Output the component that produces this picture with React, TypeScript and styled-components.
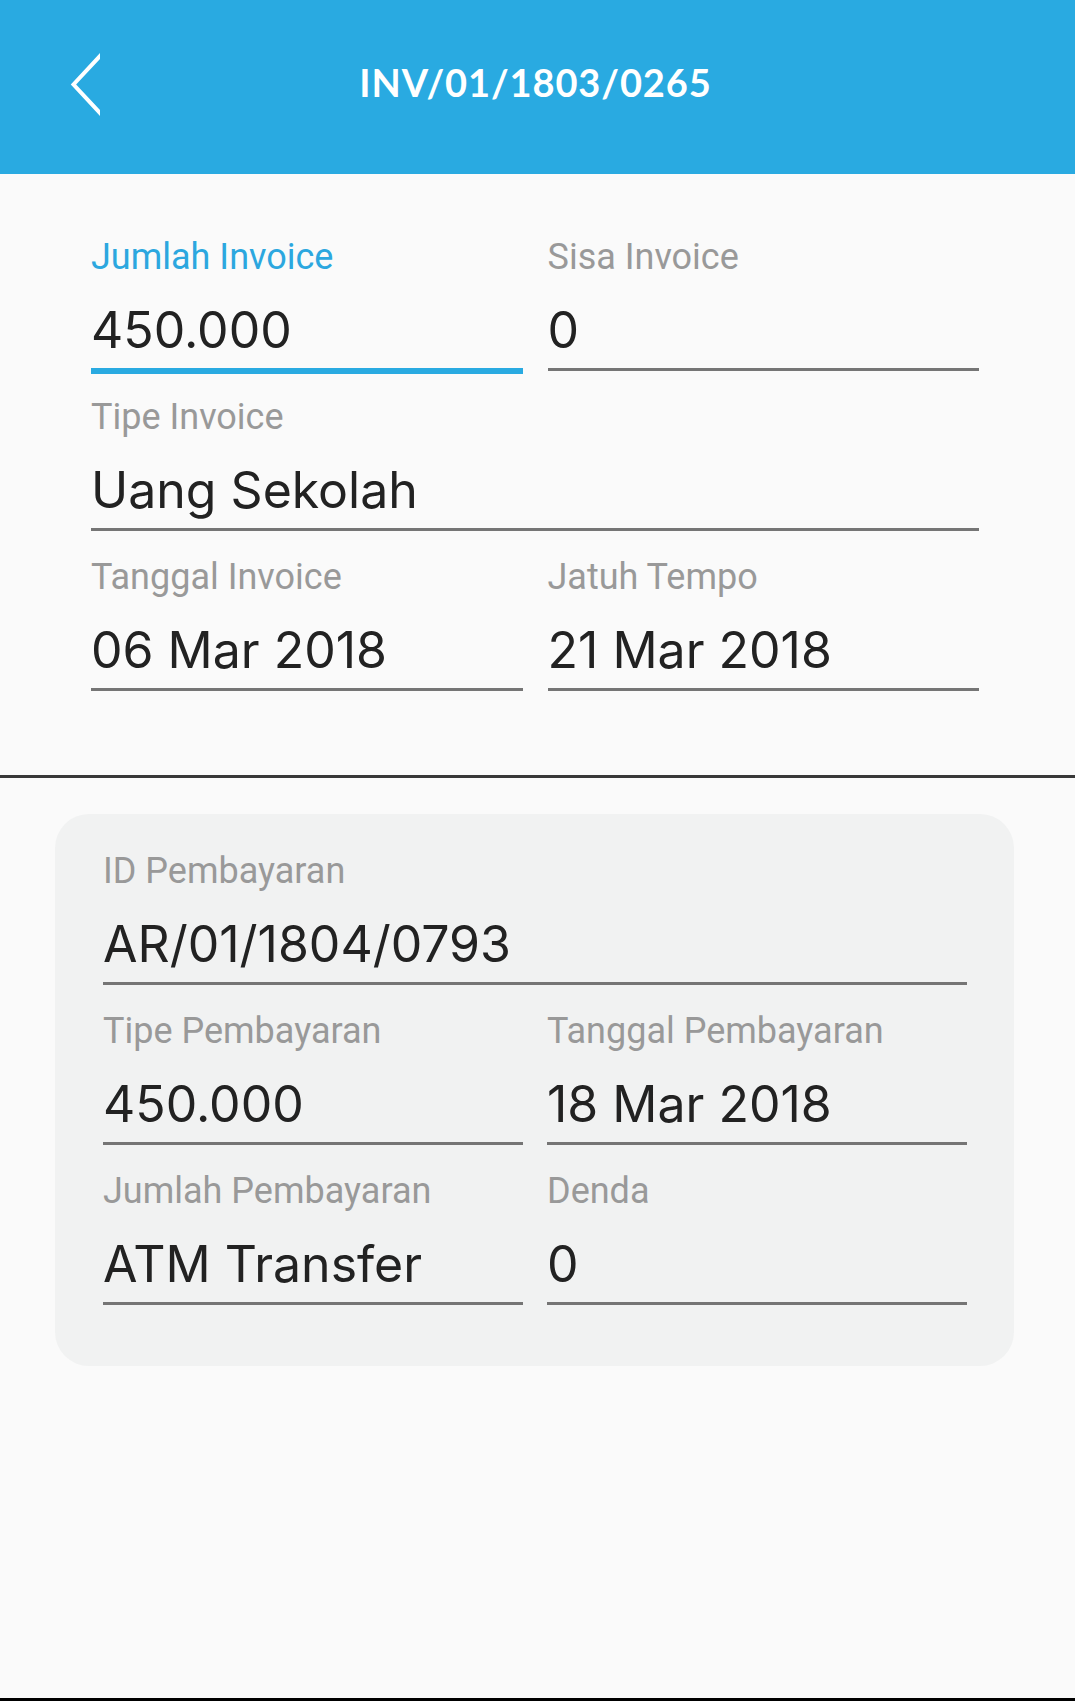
import React from "react";
import styled, { createGlobalStyle, css } from "styled-components";

const GlobalStyle = createGlobalStyle`
  html, body {
    margin: 0;
    padding: 0;
    background: #fafafa;
  }
  * {
    box-sizing: border-box;
  }
`;

const Page = styled.div`
  min-height: 100vh;
  background: #fafafa;
  border-bottom: 3px solid #000;
  display: flex;
  flex-direction: column;
`;

const Header = styled.header`
  height: 174px;
  background: #29aae1;
  display: grid;
  grid-template-columns: 126px 1fr 130px;
  align-items: start;
  padding-top: 50px;
`;

const BackButton = styled.button`
  border: 0;
  background: none;
  padding: 0;
  margin-left: 64px;
  width: 36px;
  height: 70px;
  cursor: pointer;

  svg {
    display: block;
  }
`;

const Title = styled.h1`
  margin: 9px 0 0;
  text-align: center;
  font-family: Lato, "Open Sans", sans-serif;
  font-weight: 700;
  font-size: 38px;
  line-height: 46px;
  letter-spacing: 0.9px;
  color: #fff;
`;

const InvoiceSection = styled.section`
  padding: 62px 96px 84px 91px;
  border-bottom: 3px solid #383838;
`;

const FieldGrid = styled.div<{ gap: number }>`
  display: grid;
  grid-template-columns: 1fr 1fr;
  column-gap: ${({ gap }) => gap}px;
  row-gap: 25px;
`;

const PaymentCard = styled.section`
  margin: 36px 61px 0 55px;
  padding: 36px 47px 61px 48px;
  background: #f1f2f2;
  border-radius: 34px;
`;

const FieldBox = styled.div<{ wide?: boolean }>`
  ${({ wide }) =>
    wide &&
    css`
      grid-column: 1 / -1;
    `}
`;

const Label = styled.div<{ active?: boolean }>`
  font-family: Roboto, "Noto Sans", sans-serif;
  font-size: 36px;
  line-height: 42px;
  color: ${({ active }) => (active ? "#2ca7df" : "#999999")};
`;

const Value = styled.div<{ active?: boolean }>`
  padding: 22px 0 8px;
  font-family: Inter, Lato, sans-serif;
  font-size: 50px;
  line-height: 60px;
  color: #222;
  border-bottom: 3px solid
    ${({ active }) => (active ? "#29aae1" : "#757575")};
  box-shadow: ${({ active }) => (active ? "0 3px 0 #29aae1" : "none")};
`;

type FieldProps = {
  label: string;
  value: string;
  active?: boolean;
  wide?: boolean;
};

const Field = ({ label, value, active, wide }: FieldProps) => (
  <FieldBox wide={wide}>
    <Label active={active}>{label}</Label>
    <Value active={active}>{value}</Value>
  </FieldBox>
);

const ChevronLeft = () => (
  <svg width="36" height="70" viewBox="64 50 36 70" fill="none">
    <polyline
      points="104,51.7 73.5,84.5 104,117.3"
      stroke="#fff"
      strokeWidth="4"
      strokeLinejoin="miter"
    />
  </svg>
);

export default function App() {
  return (
    <Page>
      <GlobalStyle />
      <Header>
        <BackButton aria-label="Kembali">
          <ChevronLeft />
        </BackButton>
        <Title>INV/01/1803/0265</Title>
      </Header>

      <InvoiceSection>
        <FieldGrid gap={25}>
          <Field label="Jumlah Invoice" value="450.000" active />
          <Field label="Sisa Invoice" value="0" />
          <Field label="Tipe Invoice" value="Uang Sekolah" wide />
          <Field label="Tanggal Invoice" value="06 Mar 2018" />
          <Field label="Jatuh Tempo" value="21 Mar 2018" />
        </FieldGrid>
      </InvoiceSection>

      <PaymentCard>
        <FieldGrid gap={24}>
          <Field label="ID Pembayaran" value="AR/01/1804/0793" wide />
          <Field label="Tipe Pembayaran" value="450.000" />
          <Field label="Tanggal Pembayaran" value="18 Mar 2018" />
          <Field label="Jumlah Pembayaran" value="ATM Transfer" />
          <Field label="Denda" value="0" />
        </FieldGrid>
      </PaymentCard>
    </Page>
  );
}
